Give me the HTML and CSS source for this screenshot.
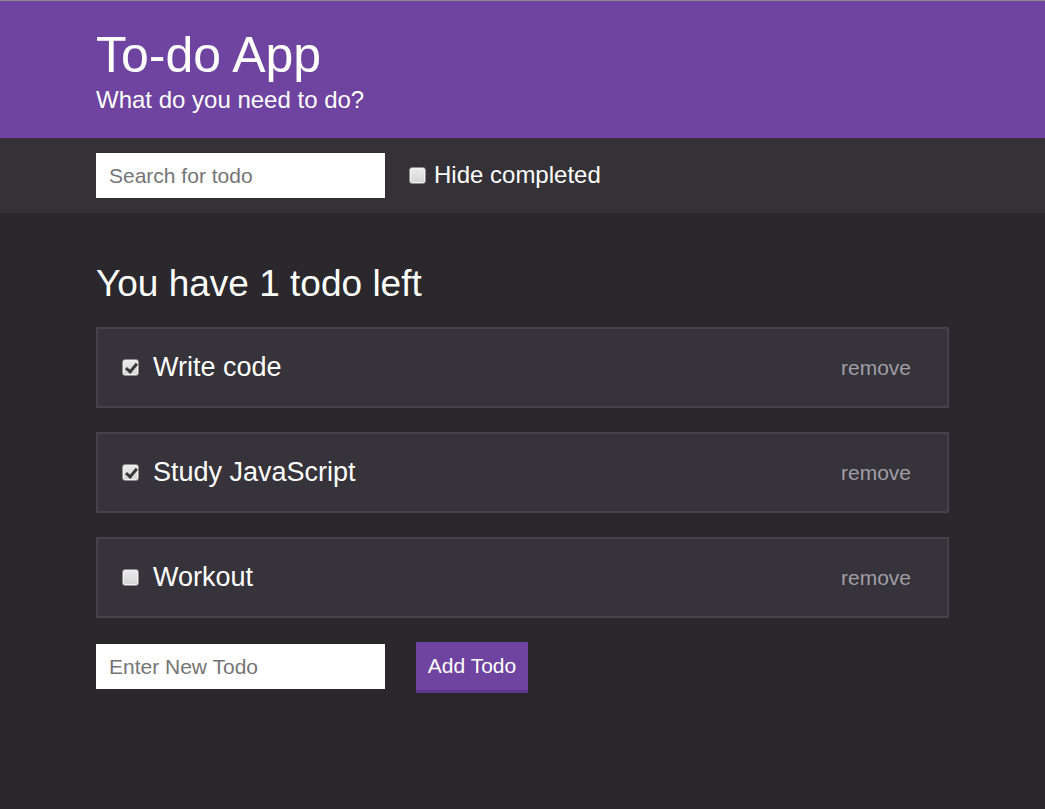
FILE: index.html
```html
<!DOCTYPE html>
<html lang="en">
<head>
<meta charset="utf-8">
<title>To-do App</title>
<link rel="stylesheet" href="styles.css">
</head>
<body>
<header class="header">
  <div class="container">
    <h1 class="title">To-do App</h1>
    <p class="subtitle">What do you need to do?</p>
  </div>
</header>
<section class="toolbar">
  <div class="container toolbar-row">
    <input class="text-input" type="text" placeholder="Search for todo">
    <label class="hide-label"><input class="check" type="checkbox"><span>Hide completed</span></label>
  </div>
</section>
<main class="main">
  <div class="container">
    <h2 class="count">You have 1 todo left</h2>
    <ul class="todo-list">
      <li class="todo">
        <label class="todo-label"><input class="check todo-check" type="checkbox" checked><span>Write code</span></label>
        <button class="remove" type="button">remove</button>
      </li>
      <li class="todo">
        <label class="todo-label"><input class="check todo-check" type="checkbox" checked><span>Study JavaScript</span></label>
        <button class="remove" type="button">remove</button>
      </li>
      <li class="todo">
        <label class="todo-label"><input class="check todo-check" type="checkbox"><span>Workout</span></label>
        <button class="remove" type="button">remove</button>
      </li>
    </ul>
    <form class="add-row">
      <input class="text-input add-input" type="text" placeholder="Enter New Todo">
      <button class="add-btn" type="button">Add Todo</button>
    </form>
  </div>
</main>
</body>
</html>
```
FILE: styles.css
```css
* { box-sizing: border-box; }
html, body { margin: 0; padding: 0; }
body {
  background: #2a282d;
  color: #ffffff;
  font-family: "Liberation Sans", Arial, sans-serif;
  border-top: 1px solid #8c8c8c;
  min-height: 809px;
}
.container {
  width: 853px;
  margin: 0 auto;
}
.header {
  background: #6f43a0;
  padding: 25px 0 24px;
}
.title {
  margin: 0;
  font-size: 50px;
  line-height: 58px;
  font-weight: normal;
}
.subtitle {
  margin: 2px 0 0;
  font-size: 24px;
  line-height: 28px;
}
.toolbar {
  background: #343137;
  padding: 15px 0;
}
.toolbar-row {
  display: flex;
  align-items: center;
}
.text-input {
  width: 289px;
  height: 45px;
  border: none;
  outline: none;
  padding: 0 13px;
  font-family: "Liberation Sans", Arial, sans-serif;
  font-size: 21px;
  color: #333;
  background: #fff;
}
.text-input::placeholder { color: #757575; }
.hide-label {
  display: flex;
  align-items: center;
  margin-left: 24px;
  font-size: 24px;
  padding-bottom: 1px;
}
.check {
  appearance: none;
  -webkit-appearance: none;
  position: relative;
  flex: none;
  width: 17px;
  height: 17px;
  margin: 0 8px 0 0;
  border: 1px solid #8e8e8e;
  border-radius: 3px;
  background: linear-gradient(#ececec, #d4d4d4);
  box-shadow: inset 0 0 0 1px #f2f2f2;
}
.check:checked::after {
  content: "";
  position: absolute;
  left: 5px;
  top: 1px;
  width: 4px;
  height: 9px;
  border: solid #3a3a3a;
  border-width: 0 3px 3px 0;
  transform: rotate(40deg);
}
.main {
  padding-top: 50px;
}
.count {
  margin: 0 0 22px;
  font-size: 37px;
  line-height: 42px;
  font-weight: normal;
}
.todo-list {
  list-style: none;
  margin: 0;
  padding: 0;
}
.todo {
  display: flex;
  align-items: center;
  justify-content: space-between;
  height: 81px;
  margin-bottom: 24px;
  padding: 0 36px 0 24px;
  background: #36333a;
  border: 2px solid #45424a;
}
.todo-label {
  display: flex;
  align-items: center;
  font-size: 27px;
}
.todo-check {
  margin-right: 14px;
}
.remove {
  background: none;
  border: none;
  padding: 0;
  color: #a19ea6;
  font-family: "Liberation Sans", Arial, sans-serif;
  font-size: 21px;
  cursor: pointer;
}
.add-row {
  display: flex;
  align-items: flex-start;
  margin: 0;
}
.add-input {
  margin-top: 2px;
}
.add-btn {
  margin-left: 31px;
  width: 112px;
  height: 51px;
  padding: 0;
  border: none;
  border-bottom: 3px solid #5d388a;
  background: #6f43a0;
  color: #fff;
  font-family: "Liberation Sans", Arial, sans-serif;
  font-size: 21px;
  cursor: pointer;
}
```
